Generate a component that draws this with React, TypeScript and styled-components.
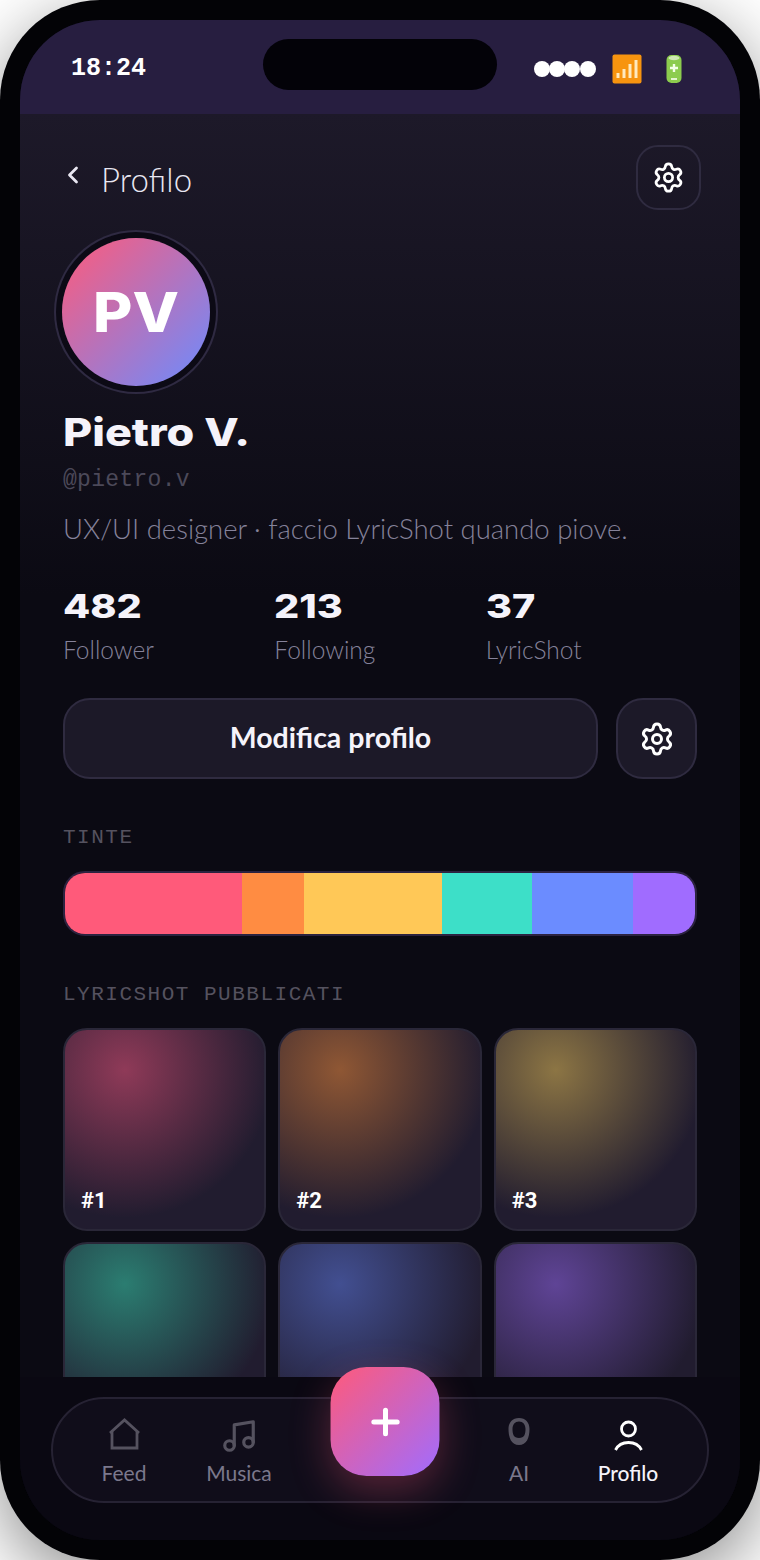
import React from "react";
import styled, { createGlobalStyle } from "styled-components";
import { ChevronLeft, Music, Plus, Settings } from "lucide-react";

const display = `Inter, "DejaVu Sans", sans-serif`;
const body = `Lato, "Open Sans", sans-serif`;
const mono = `"Liberation Mono", monospace`;

const tints = [
  { color: "#ff5a7a", width: 177 },
  { color: "#ff8c42", width: 62 },
  { color: "#ffc857", width: 138 },
  { color: "#3ddfc8", width: 90 },
  { color: "#6b8cff", width: 101 },
  { color: "#a06cff", width: 62 },
];

// the second row runs under the nav, its numbers are never on screen
const shots = [
  { glow: "#8f3a58", title: "#1" },
  { glow: "#8f5734", title: "#2" },
  { glow: "#8c7544", title: "#3" },
  { glow: "#2b7d71" },
  { glow: "#424f91" },
  { glow: "#5f4496" },
];

const stats = [
  { value: "482", label: "Follower" },
  { value: "213", label: "Following" },
  { value: "37", label: "LyricShot" },
];

const App = (): React.ReactElement => {
  return (
    <>
      <GlobalStyle />
      <Phone>
        <Screen>
          <StatusBar>
            <Clock>18:24</Clock>
            <Notch />
            <StatusIcons>
              <Dots>
                <Dot />
                <Dot />
                <Dot />
                <Dot />
              </Dots>
              <svg width="30" height="30" viewBox="0 0 30 30">
                <rect width="29" height="29" x="0.5" y="0.5" rx="2" fill="#f7940f" />
                <path d="M6 24v-5M12 24v-9M18 24V10M24 24V6" stroke="#ffe9bd" strokeWidth="3" />
              </svg>
              <BatteryIcon width="16" height="30" viewBox="0 0 16 30">
                <rect x="0.500" y="1" width="15" height="28" rx="5" fill="#8ccc4e" />
                <ellipse cx="8" cy="4" rx="5.500" ry="2.200" fill="#cfe8b4" />
                <path d="M8 10v8M4 14h8" stroke="#f3ffe6" strokeWidth="2.400" />
                <path d="M5 25h6" stroke="#e3f5cf" strokeWidth="2" />
              </BatteryIcon>
            </StatusIcons>
          </StatusBar>

          <Content>
            <Header>
              <BackLink>
                <ChevronLeft size={28} strokeWidth={2.4} />
                <HeaderTitle>Profilo</HeaderTitle>
              </BackLink>
              <HeaderButton>
                <Settings size={33} strokeWidth={2} />
              </HeaderButton>
            </Header>

            <Avatar>
              <AvatarText>PV</AvatarText>
            </Avatar>
            <Name>Pietro V.</Name>
            <Handle>@pietro.v</Handle>
            <Bio>UX/UI designer · faccio LyricShot quando piove.</Bio>

            <Stats>
              {stats.map((stat) => (
                <div key={stat.label}>
                  <StatValue>{stat.value}</StatValue>
                  <StatLabel>{stat.label}</StatLabel>
                </div>
              ))}
            </Stats>

            <Actions>
              <EditButton>Modifica profilo</EditButton>
              <SquareButton>
                <Settings size={36} strokeWidth={2} />
              </SquareButton>
            </Actions>

            <SectionLabel>TINTE</SectionLabel>
            <TintBar>
              {tints.map((tint) => (
                <Tint key={tint.color} color={tint.color} grow={tint.width} />
              ))}
            </TintBar>

            <SectionLabel>LYRICSHOT PUBBLICATI</SectionLabel>
            <ShotGrid>
              {shots.map((shot) => (
                <Shot key={shot.glow} glow={shot.glow}>
                  {shot.title && <ShotNumber>{shot.title}</ShotNumber>}
                </Shot>
              ))}
            </ShotGrid>
          </Content>

          <BottomArea>
            <Nav>
              <NavItem>
                <NavIcon viewBox="0 0 36 36" fill="none" stroke="currentColor" strokeWidth="2.800">
                  <path d="M4 16 18.500 3 33 16" />
                  <path d="M6 14.500V31h25V14.500" />
                </NavIcon>
                Feed
              </NavItem>
              <NavItem>
                <MusicIcon size={38} strokeWidth={2} />
                Musica
              </NavItem>
              <FabSlot>
                <Fab>
                  <Plus size={40} strokeWidth={3} />
                </Fab>
              </FabSlot>
              <NavItem>
                <NavIcon viewBox="0 0 36 36" fill="none">
                  <path
                    d="M18 1c6.500 0 10.500 4.500 10.500 11 0 9-3 16-10.500 16S7.500 21 7.500 12C7.500 5.500 11.500 1 18 1Zm0 3.500c-4 0-6.500 3-6.500 7.500 0 5 1 9 6.500 9s6.500-4 6.500-9c0-4.500-2.500-7.500-6.500-7.500Z"
                    fill="currentColor"
                    fillRule="evenodd"
                  />
                </NavIcon>
                AI
              </NavItem>
              <NavItem active>
                <NavIcon viewBox="0 0 36 36" fill="none" stroke="currentColor" strokeWidth="2.800">
                  <circle cx="18.500" cy="12" r="7" />
                  <path d="M5.500 33c2.500-5 7-7.500 13-7.500s10.500 2.500 13 7.500" />
                </NavIcon>
                Profilo
              </NavItem>
            </Nav>
          </BottomArea>
        </Screen>
      </Phone>
    </>
  );
};

export default App;

const GlobalStyle = createGlobalStyle`
  html, body {
    margin: 0;
    background: #ffffff;
  }
  * {
    box-sizing: border-box;
  }
  #root {
    width: 760px;
    height: 1560px;
    overflow: hidden;
  }
`;

const Phone = styled.div`
  width: 760px;
  height: 1560px;
  padding: 20px;
  background: #030306;
  border-radius: 100px;
  box-shadow: 0 20px 70px rgba(0, 0, 0, 0.45);
`;
const Screen = styled.div`
  height: 100%;
  border-radius: 80px;
  overflow: hidden;
  display: flex;
  flex-direction: column;
  background: #0a0812;
`;
const StatusBar = styled.div`
  position: relative;
  flex: none;
  height: 94px;
  padding: 4px 58px 0 51px;
  display: flex;
  align-items: center;
  justify-content: space-between;
  background: #271e40;
`;
const Clock = styled.span`
  font-family: ${mono};
  font-weight: 700;
  font-size: 25px;
  color: #ffffff;
  margin-top: -1px;
`;
const Notch = styled.div`
  position: absolute;
  left: 243px;
  top: 19px;
  width: 234px;
  height: 51px;
  border-radius: 26px;
  background: #030208;
`;
const StatusIcons = styled.div`
  display: flex;
  align-items: center;
  gap: 16px;
`;
const BatteryIcon = styled.svg`
  margin-left: 8px;
`;
const Dots = styled.div`
  display: flex;
  margin-right: 1px;
`;
const Dot = styled.span`
  width: 16px;
  height: 16px;
  margin-right: -0.700px;
  border-radius: 50%;
  background: #ffffff;
`;
const Content = styled.div`
  flex: 1;
  min-height: 0;
  overflow: hidden;
  padding: 31px 43px 0;
  background: linear-gradient(#1d1929 0, #0b0a13 480px);
`;
const Header = styled.div`
  display: flex;
  align-items: center;
  justify-content: space-between;
  margin-right: -4px;
`;
const BackLink = styled.div`
  display: flex;
  align-items: center;
  gap: 14px;
  margin-left: -4px;
  color: #e9e7f2;
  svg {
    margin-top: -5px;
  }
`;
const HeaderTitle = styled.span`
  font-family: ${body};
  font-weight: 300;
  font-size: 33px;
  margin-top: 2px;
`;
const HeaderButton = styled.div`
  width: 65px;
  height: 65px;
  border-radius: 22px;
  border: 2px solid #2f2b40;
  display: flex;
  align-items: center;
  justify-content: center;
  color: #ffffff;
`;
const Avatar = styled.div`
  width: 148px;
  height: 148px;
  margin: 28px 0 0 -1px;
  border-radius: 50%;
  display: flex;
  align-items: center;
  justify-content: center;
  font-family: ${display};
  font-weight: 800;
  font-size: 55px;
  color: #ffffff;
  background: linear-gradient(135deg, #ff5a7a, #6b8cff);
  box-shadow: 0 0 0 6px #0c0a15, 0 0 0 8px #2f2a42;
`;
const AvatarText = styled.span`
  display: inline-block;
  transform: scaleX(1.1);
`;
const Name = styled.h1`
  margin: 21px 0 0;
  font-family: ${display};
  font-weight: 800;
  font-size: 38px;
  line-height: 50px;
  color: #f5f3fa;
  transform: scaleX(1.18);
  transform-origin: left center;
`;
const Handle = styled.div`
  margin-top: 9px;
  font-family: ${mono};
  font-size: 23px;
  line-height: 28px;
  letter-spacing: 0.300px;
  color: #4c4959;
`;
const Bio = styled.p`
  margin: 17px 0 0;
  font-family: ${body};
  font-weight: 300;
  font-size: 27.500px;
  line-height: 36px;
  color: #85829a;
`;
const Stats = styled.div`
  display: grid;
  grid-template-columns: repeat(3, 1fr);
  margin-top: 38px;
`;
const StatValue = styled.div`
  font-family: ${display};
  font-weight: 800;
  font-size: 33px;
  line-height: 42px;
  color: #f5f3fa;
  transform: scaleX(1.2);
  transform-origin: left center;
`;
const StatLabel = styled.div`
  margin-top: 8px;
  font-family: ${body};
  font-weight: 300;
  font-size: 24.500px;
  line-height: 30px;
  color: #85829a;
`;
const Actions = styled.div`
  display: flex;
  gap: 18px;
  margin-top: 33px;
`;
const EditButton = styled.div`
  flex: 1;
  height: 81px;
  padding-bottom: 4px;
  border-radius: 27px;
  border: 2px solid #2f2b40;
  background: #1c1928;
  display: flex;
  align-items: center;
  justify-content: center;
  font-family: ${body};
  font-weight: 700;
  font-size: 28.500px;
  color: #f5f3fa;
`;
const SquareButton = styled(EditButton)`
  flex: none;
  width: 81px;
  padding-bottom: 0;
  color: #ffffff;
`;
const SectionLabel = styled.div`
  margin: 48px 0 0;
  font-family: ${mono};
  font-size: 21px;
  line-height: 22px;
  letter-spacing: 1.500px;
  color: #55525f;
`;
const TintBar = styled.div`
  display: flex;
  height: 65px;
  margin: 22px 0 2px;
  border-radius: 22px;
  border: 2px solid #2c2340;
  overflow: hidden;
`;
const Tint = styled.div<{ color: string; grow: number }>`
  flex: ${(props) => props.grow} 0 0;
  background: ${(props) => props.color};
`;
const ShotGrid = styled.div`
  display: grid;
  grid-template-columns: repeat(3, 1fr);
  gap: 11px 12px;
  margin-top: 22px;
`;
const Shot = styled.div<{ glow: string }>`
  aspect-ratio: 1;
  border-radius: 24px;
  border: 2px solid #2a2738;
  padding: 0 16px 16px;
  display: flex;
  align-items: flex-end;
  background: radial-gradient(circle at 30% 20%, ${(props) => props.glow}, #211c2f 70%);
`;
const ShotNumber = styled.span`
  font-family: Roboto, sans-serif;
  font-weight: 700;
  font-size: 22px;
  color: #ffffff;
`;
const BottomArea = styled.div`
  flex: none;
  height: 163px;
  padding: 20px 31px 0;
  background: #0a0812;
`;
const Nav = styled.nav`
  display: grid;
  grid-template-columns: 114px 116px 176px 92px 126px;
  height: 106px;
  padding-left: 14px;
  border-radius: 53px;
  border: 2px solid #262233;
  background: #100d1a;
`;
const NavItem = styled.div<{ active?: boolean }>`
  display: flex;
  flex-direction: column;
  align-items: center;
  justify-content: flex-start;
  padding-top: 18px;
  gap: 7px;
  font-family: ${body};
  font-weight: ${(props) => (props.active ? 500 : 400)};
  font-size: 21px;
  color: ${(props) => (props.active ? "#f5f3fa" : "#7b788c")};
  svg {
    color: ${(props) => (props.active ? "#ffffff" : "#55525f")};
  }
`;
const NavIcon = styled.svg`
  flex: none;
  width: 36px;
  height: 36px;
`;
const MusicIcon = styled(Music)`
  flex: none;
  margin-bottom: -2px;
`;
const FabSlot = styled.div`
  position: relative;
`;
const Fab = styled.div`
  position: absolute;
  left: 50%;
  top: -32px;
  width: 109px;
  height: 109px;
  transform: translateX(-50%);
  border-radius: 36px;
  display: flex;
  align-items: center;
  justify-content: center;
  color: #ffffff;
  background: linear-gradient(135deg, #ff5a7a, #a06cff);
  box-shadow: 0 14px 40px rgba(255, 90, 122, 0.3);
`;
